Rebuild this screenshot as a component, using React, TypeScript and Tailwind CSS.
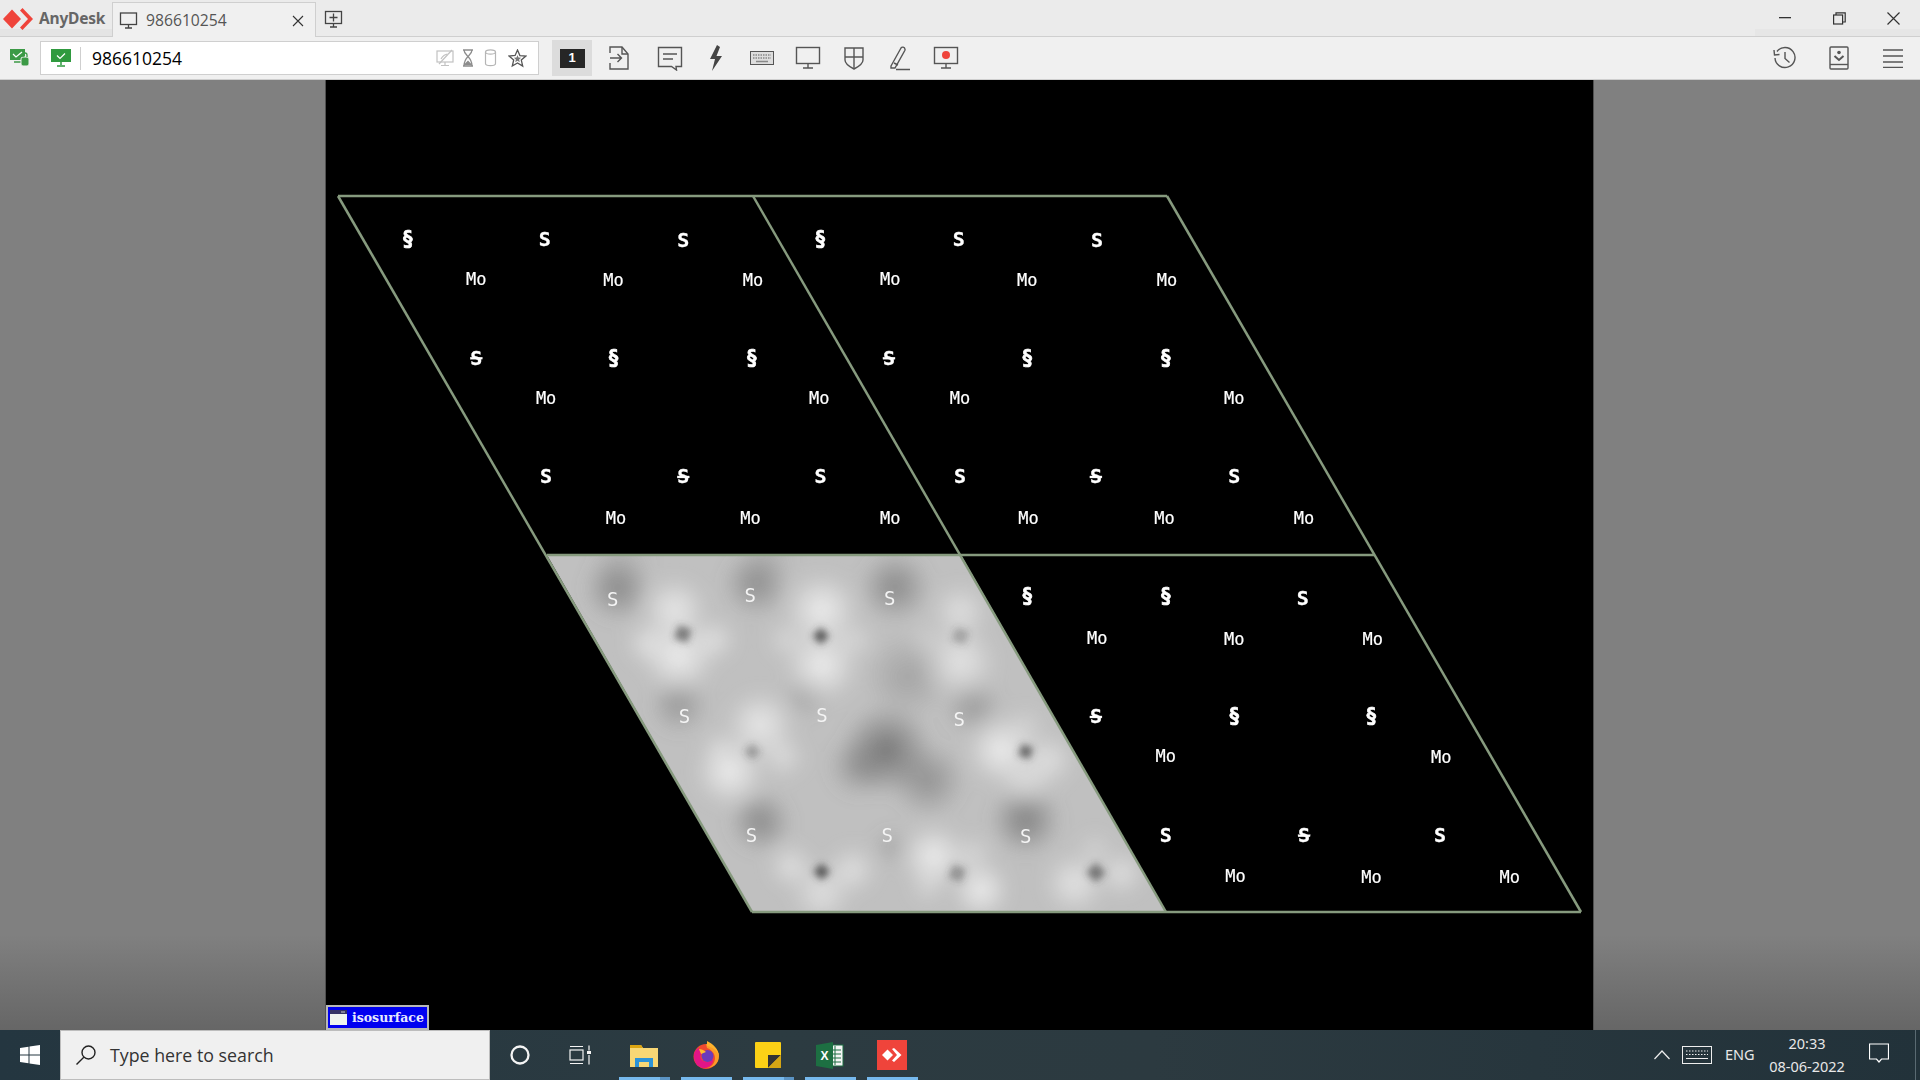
import React from "react";

const F = "font-['Open_Sans','Noto_Sans',sans-serif]";

function Logo() {
  return (
    <svg width="30" height="22" viewBox="0 0 30 22">
      <polygon points="0,11 9,1.500 18,11 9,20.500" fill="#ef443b" />
      <polygon points="17,2.500 19.500,0 30,11 19.500,22 17,19.500 25,11" fill="#ef443b" />
    </svg>
  );
}

function Ic({ w = 26, h = 26, children, s = "#555", sw = 1.4 }: { w?: number; h?: number; children: React.ReactNode; s?: string; sw?: number }) {
  return (
    <svg width={w} height={h} viewBox={`0 0 ${w} ${h}`} fill="none" stroke={s} strokeWidth={sw}>
      {children}
    </svg>
  );
}

function Monitor({ s = "#555", dot = false }: { s?: string; dot?: boolean }) {
  return (
    <Ic s={s}>
      <rect x="1.500" y="2.500" width="23" height="16" />
      <path d="M13 18.500v4M8 23h10" />
      {dot && <circle cx="13" cy="10" r="4" fill="#ef443b" stroke="none" />}
    </Ic>
  );
}

function Slot({ children, w = "w-[46px]" }: { children: React.ReactNode; w?: string }) {
  return <div className={`${w} h-full flex items-center justify-center shrink-0`}>{children}</div>;
}

function TitleBar() {
  return (
    <div className={`h-[37px] bg-[#ebebeb] flex items-stretch shrink-0 relative ${F}`}>
      <div className="absolute left-0 bottom-0 w-[112px] h-[8px] bg-[#e4e4e4]" />
      <div className="absolute right-0 bottom-0 w-[165px] h-[8px] bg-[#e6e6e6]" />
      <div className="relative w-[112px] flex items-center shrink-0 pl-[3px] pt-[2px] bg-transparent gap-[6px] border-b border-[#cfcfcf]">
        <Logo />
        <span className="text-[15.500px] font-bold text-[#666] tracking-[-0.2px] font-['Noto_Sans',sans-serif]">AnyDesk</span>
      </div>
      <div className="relative w-[204px] mt-[2px] bg-[#f0f0f0] border border-b-0 border-[#cfcfcf] flex items-center pl-[6px] pt-[1px] shrink-0">
        <svg width="20" height="20" viewBox="0 0 20 20" fill="none" stroke="#444" strokeWidth="1.300">
          <rect x="1.500" y="2" width="16" height="11.500" />
          <path d="M9.500 13.500v3M6 17h7" />
        </svg>
        <span className="ml-[7px] text-[15.700px] text-[#555]">986610254</span>
        <svg className="ml-auto mr-[11px]" width="12" height="12" viewBox="0 0 12 12" stroke="#333" strokeWidth="1.100">
          <path d="M1 1l10 10M11 1L1 11" />
        </svg>
      </div>
      <div className="relative flex-1 flex items-center border-b border-[#cfcfcf] pl-[8px]">
        <svg className="mt-[3px]" width="20" height="20" viewBox="0 0 20 20" fill="none" stroke="#444" strokeWidth="1.300">
          <rect x="1.500" y="1.500" width="16" height="12" />
          <path d="M9.500 3.500v8M5.500 7.500h8M9.500 13.500v3M6 17h7" />
        </svg>
        <div className="ml-auto flex h-full">
          <Slot w="w-[54px]">
            <svg width="12" height="2" viewBox="0 0 12 2"><rect width="12" height="1.300" fill="#333" /></svg>
          </Slot>
          <Slot w="w-[54px]">
            <svg width="13" height="13" viewBox="0 0 13 13" fill="none" stroke="#333" strokeWidth="1.200">
              <rect x="0.600" y="3" width="9" height="9" />
              <path d="M3 3V0.800h9.200V10H9.600" />
            </svg>
          </Slot>
          <Slot w="w-[54px]">
            <svg width="13" height="13" viewBox="0 0 13 13" stroke="#333" strokeWidth="1.200"><path d="M0.500 0.500l12 12M12.500 0.500l-12 12" /></svg>
          </Slot>
        </div>
      </div>
    </div>
  );
}

function Toolbar() {
  return (
    <div className={`h-[43px] bg-[#f0f0f0] flex items-center shrink-0 border-b border-[#cfcfcf] ${F}`}>
      <div className="w-[40px] flex justify-center shrink-0">
        <svg width="20" height="20" viewBox="0 0 20 20">
          <rect x="0" y="1" width="15" height="11" fill="#3c9a46" />
          <path d="M3 6l3 3 6-5" stroke="#fff" strokeWidth="1.200" fill="none" />
          <path d="M4 14h8" stroke="#3c9a46" strokeWidth="1.500" />
          <rect x="11" y="9" width="8" height="9" rx="2" fill="#3c9a46" stroke="#f0f0f0" />
          <path d="M13 9V7a2 2 0 0 1 4 0v2" stroke="#3c9a46" strokeWidth="1.300" fill="none" />
        </svg>
      </div>
      <div className="w-[499px] h-[34px] bg-white border border-[#cfcfcf] flex items-center shrink-0">
        <div className="w-[40px] h-[23px] flex items-center justify-center border-r border-[#cfcfcf] shrink-0">
          <svg width="20" height="20" viewBox="0 0 20 20">
            <rect x="0" y="1" width="20" height="13" fill="#2f9a3f" />
            <path d="M6 7.500l3 3 5-5" stroke="#fff" strokeWidth="1.200" fill="none" />
            <path d="M10 14v3M6 18h8" stroke="#2f9a3f" strokeWidth="1.500" />
          </svg>
        </div>
        <span className="ml-[11px] text-[17.500px] text-black">986610254</span>
        <div className="ml-auto flex items-center mr-[11px]">
          <svg width="18" height="18" viewBox="0 0 18 18" fill="none" stroke="#c2c2c2" strokeWidth="1.200">
            <rect x="1" y="2" width="16" height="11" />
            <path d="M9 13v3M5 16.500h8M3 15L16 1M5 10c1-2 3-5 8-5" />
          </svg>
          <svg className="ml-[8px]" width="12" height="18" viewBox="0 0 12 18" fill="none" stroke="#8d8d8d" strokeWidth="1.300">
            <path d="M1 1h10M1 17h10M2 1c0 6 8 6 8 16M10 1c0 6-8 6-8 16" />
            <path d="M3 15.500l3-3 3 3z" fill="#8d8d8d" />
          </svg>
          <svg className="ml-[10px]" width="13" height="18" viewBox="0 0 13 18" fill="none" stroke="#b5b5b5" strokeWidth="1.200">
            <ellipse cx="6.500" cy="3" rx="5" ry="2.200" />
            <path d="M1.500 3v11.500c0 1.400 2 2.200 5 2.200s5-.8 5-2.200V3" />
          </svg>
          <svg className="ml-[11px]" width="19" height="19" viewBox="0 0 19 19" fill="none" stroke="#555" strokeWidth="1.300">
            <path d="M9.500 1l2.400 5.600 6 .5-4.600 4 1.400 6-5.200-3.200L4.300 17l1.400-6-4.600-4 6-.5z" />
            <path d="M9.500 6l1 2.600 2.700.2-2.100 1.800.7 2.700-2.300-1.500-2.300 1.500.7-2.700-2.100-1.800 2.700-.2z" fill="#777" stroke="none" />
          </svg>
        </div>
      </div>
      <div className="ml-[13px] w-[40px] h-[36px] bg-[#dcdcdc] flex items-center justify-center shrink-0">
        <div className="w-[25px] h-[19px] bg-[#262626] flex items-center justify-center text-white text-[13px] font-bold font-['Liberation_Sans',sans-serif]">1</div>
      </div>
      <div className="ml-[4px] h-full flex items-center">
        <Slot>
          <Ic w={20} h={24}>
            <path d="M1 7V1h12l6 7v15H1v-6" />
            <path d="M13 1v7h6" />
            <path d="M1 12h11M8.500 8l4 4-4 4" />
          </Ic>
        </Slot>
      </div>
      <div className="ml-[5px] flex items-center h-full">
        <Slot>
          <Ic>
            <path d="M1.500 2.500h23v19H19l.5 3.500-5-3.500H1.500z" />
            <path d="M6 9h14M6 14h10" />
          </Ic>
        </Slot>
        <Slot>
          <svg width="14" height="26" viewBox="0 0 14 26"><path d="M8 0L1 14h5L3 26l10-15H7.500L11 2z" fill="#444" /></svg>
        </Slot>
        <Slot>
          <svg width="24" height="14" viewBox="0 0 24 14">
            <rect x="0.500" y="0.500" width="23" height="13" fill="#ddd" stroke="#555" />
            <path d="M3 4h18M3 7h18" stroke="#888" strokeWidth="1.500" strokeDasharray="1.500 1" />
            <path d="M6 10.500h12" stroke="#888" strokeWidth="1.500" />
          </svg>
        </Slot>
        <Slot><Monitor /></Slot>
        <Slot>
          <Ic w={20} h={24}>
            <path d="M1 2h18v12c0 4-5 7-9 9-4-2-9-5-9-9z" />
            <path d="M10 2v21M1 11h18" />
          </Ic>
        </Slot>
        <Slot>
          <Ic w={22} h={26}>
            <path d="M2 21L12 3c1-1.500 3.500-1 4 1 .2.500 0 1-.2 1.500L6 23H2z" />
            <path d="M5 18l4 2M7 24.500h14" />
          </Ic>
        </Slot>
        <Slot><Monitor dot /></Slot>
      </div>
      <div className="ml-auto flex h-full">
        <Slot w="w-[54px]">
          <Ic w={24} h={24}>
            <path d="M4 5.500A10 10 0 1 1 2 12" />
            <path d="M1 4l.5 5 5-.5" />
            <path d="M12 6v6.500l4.500 4" />
          </Ic>
        </Slot>
        <Slot w="w-[54px]">
          <Ic w={20} h={24}>
            <rect x="1" y="1" width="18" height="22" rx="1" />
            <path d="M1 18.500h18" />
            <circle cx="10" cy="6.500" r="1.800" fill="#555" stroke="none" />
            <path d="M5.500 10l4.500 4 4.500-4" strokeWidth="2" />
          </Ic>
        </Slot>
        <Slot w="w-[54px]">
          <svg width="20" height="20" viewBox="0 0 20 20" stroke="#555" strokeWidth="1.400">
            <path d="M0 2h20M0 8h20M0 14h20M0 19.500h20" />
          </svg>
        </Slot>
      </div>
    </div>
  );
}

const k = 1920 / 1568;
const X0 = 325;
const Y0 = 80;
const fx = (x: number) => x * k - X0;
const fy = (y: number) => y * k - Y0;

type L = [number, number, string];
const sect = "§";
const labels: L[] = [
  [333, 195, sect], [445, 195, "S"], [558, 196, "S"], [389, 292, "s"], [501, 292, sect], [614, 292, sect], [446, 389, "S"], [558, 389, "s"], [670, 389, "S"],
  [670, 195, sect], [783, 195, "S"], [896, 196, "S"], [726, 292, "s"], [839, 292, sect], [952, 292, sect], [784, 389, "S"], [895, 389, "s"], [1008, 389, "S"],
  [839, 487, sect], [952, 487, sect], [1064, 488, "S"], [895, 585, "s"], [1008, 585, sect], [1120, 585, sect], [952, 682, "S"], [1065, 682, "s"], [1176, 682, "S"],
];
const mos: [number, number][] = [
  [389, 228], [501, 229], [615, 229], [446, 325], [669, 325], [503, 423], [613, 423], [727, 423],
  [727, 228], [839, 229], [953, 229], [784, 325], [1008, 325], [840, 423], [951, 423], [1065, 423],
  [896, 521], [1008, 522], [1121, 522], [952, 617], [1177, 618], [1009, 715], [1120, 716], [1233, 716],
];
const z = (x: number) => 540 + x / 2.45 - X0;
const w = (y: number) => 550 + y / 3 - Y0;
const greyS: [number, number][] = [[178, 148], [515, 135], [857, 143], [354, 499], [691, 496], [1027, 507], [518, 855], [851, 855], [1190, 858]];
const spots: [number, number, number, number][] = [
  [350, 252, 7, 0.6], [688, 258, 6, 0.8], [1030, 258, 7, 0.3], [520, 605, 6, 0.35], [1190, 605, 6, 0.7], [690, 965, 6, 0.8], [1022, 970, 7, 0.4], [1362, 968, 7, 0.6],
];
const darks: [number, number, number, number][] = [
  [190, 115, 34, 0.7], [530, 100, 34, 0.65], [870, 110, 36, 0.7], [340, 465, 30, 0.5], [650, 440, 24, 0.3], [1060, 470, 30, 0.45], [540, 815, 32, 0.7], [860, 890, 20, 0.3], [1190, 810, 36, 0.8],
  [850, 600, 46, 0.95], [780, 650, 32, 0.5], [950, 690, 38, 0.6], [200, 30, 34, 0.15], [900, 380, 44, 0.35], [560, 20, 30, 0.15],
];
const halos: [number, number, number, number][] = [
  [330, 180, 34, 0.9], [340, 320, 38, 1], [265, 280, 24, 0.7], [425, 270, 24, 0.7],
  [690, 180, 38, 1], [690, 345, 38, 1], [605, 270, 22, 0.5], [770, 270, 22, 0.5],
  [1030, 185, 30, 0.7], [1030, 335, 38, 0.8], [950, 270, 20, 0.3],
  [540, 525, 36, 0.9], [465, 665, 36, 1], [595, 620, 24, 0.6], [440, 590, 20, 0.4],
  [1130, 600, 36, 1], [1245, 630, 28, 0.7], [1190, 690, 28, 0.6], [1190, 530, 22, 0.4],
  [615, 950, 24, 0.7], [765, 960, 26, 0.7], [690, 1030, 32, 0.7],
  [965, 920, 34, 1], [1080, 1020, 30, 1], [1060, 915, 22, 0.5], [950, 1010, 20, 0.4],
  [1310, 1000, 32, 0.8], [1425, 970, 24, 0.7], [1360, 900, 20, 0.4],
];

function Lattice() {
  const p = (x: number, y: number) => `${x - X0},${y - Y0}`;
  const xs = [338, 753, 1167];
  const ml = [547, 961, 1374];
  const bt = [752, 1166, 1581];
  const grey = [p(547, 555), p(961, 555), p(1166, 912), p(752, 912)].join(" ");
  return (
    <svg className="w-full h-full block" viewBox="0 0 1269 950" width="1269" height="950">
      <defs>
        <clipPath id="gc"><polygon points={grey} /></clipPath>
        <radialGradient id="dk"><stop offset="0%" stopColor="#707070" /><stop offset="55%" stopColor="#707070" stopOpacity="0.45" /><stop offset="100%" stopColor="#707070" stopOpacity="0" /></radialGradient>
        <radialGradient id="wh"><stop offset="0%" stopColor="#eeeeee" /><stop offset="100%" stopColor="#eeeeee" stopOpacity="0" /></radialGradient>
        <filter id="bl" x="-50%" y="-50%" width="200%" height="200%"><feGaussianBlur stdDeviation="3.500" /></filter>
        <filter id="bg" x="-10%" y="-10%" width="120%" height="120%"><feGaussianBlur stdDeviation="8" /></filter>
      </defs>
      <g clipPath="url(#gc)">
        <rect x="200" y="460" width="700" height="380" fill="#c0c0c0" />
        <g filter="url(#bg)">
          {darks.map(([x, y, r, o], i) => <circle key={i} cx={z(x)} cy={w(y)} r={r} fill="url(#dk)" opacity={o} />)}
          {halos.map(([x, y, r, o], i) => <circle key={i} cx={z(x)} cy={w(y)} r={r} fill="url(#wh)" opacity={o} />)}
        </g>
        <g filter="url(#bl)">
          {spots.map(([x, y, r, o], i) => <rect key={i} x={z(x) - r} y={w(y) - r} width={r * 2} height={r * 2} transform={`rotate(${i % 2 ? 45 : 20} ${z(x)} ${w(y)})`} fill="#404040" opacity={o} />)}
        </g>
      </g>
      <g fill="none" stroke="#869a7e" strokeWidth="2.500">
        <path d={`M${p(xs[0], 196)}L${p(xs[2], 196)}`} />
        <path d={`M${p(ml[0], 555)}L${p(ml[2], 555)}`} />
        <path d={`M${p(bt[0], 912)}L${p(bt[2], 912)}`} />
        <path d={`M${p(xs[0], 196)}L${p(bt[0], 912)}`} />
        <path d={`M${p(xs[1], 196)}L${p(bt[1], 912)}`} />
        <path d={`M${p(xs[2], 196)}L${p(bt[2], 912)}`} />
      </g>
      <g className="font-['DejaVu_Sans_Mono',monospace]" fill="#fff" textAnchor="middle">
        {labels.map(([x, y, t], i) => (
          <text key={i} x={fx(x)} y={fy(y) + 7} fontSize={t === sect ? 21 : 20} fontWeight="700" stroke="#fff" strokeWidth={t === sect ? 0.7 : 0.3} textDecoration={t === "s" ? "line-through" : undefined}>
            {t === "s" ? "S" : t}
          </text>
        ))}
        {mos.map(([x, y], i) => (
          <text key={i} x={fx(x)} y={fy(y) + 6} fontSize="17" fontWeight="400" stroke="#fff" strokeWidth="0.200">Mo</text>
        ))}
        {greyS.map(([x, y], i) => (
          <text key={i} x={z(x)} y={w(y) + 7} fontSize="19" fill="#f4f4f4">S</text>
        ))}
      </g>
    </svg>
  );
}

const side = "bg-[linear-gradient(to_bottom,#808080_0%,#808080_90%,#666666_100%)]";

function Main() {
  return (
    <div className="flex-1 flex min-h-0">
      <div className={`w-[325px] shrink-0 ${side}`} />
      <div className="w-[1269px] shrink-0 bg-black relative shadow-[inset_1px_0_#505050,inset_-1px_0_#505050]">
        <Lattice />
        <div className="absolute left-[1px] bottom-[0px] w-[103px] h-[25px] bg-[#0000f0] border-2 border-[#b8b8b8] flex items-center pl-[2px]">
          <svg width="17" height="15" viewBox="0 0 17 15">
            <rect x="0" y="0" width="17" height="15" fill="#eef4ee" />
            <rect x="0" y="0" width="17" height="4" fill="#343464" />
            <rect x="11" y="1.500" width="4" height="1" fill="#ccc" />
          </svg>
          <span className="ml-[5px] mt-[1px] text-[12.500px] font-bold leading-none text-[#e8e8ff] font-['DejaVu_Serif',serif]">isosurface</span>
        </div>
      </div>
      <div className={`flex-1 ${side}`} />
    </div>
  );
}

function TBItem({ children, split }: { children: React.ReactNode; split?: boolean }) {
  return (
    <div className="relative w-[51px] h-full flex items-center justify-center mr-[11px] shrink-0">
      {children}
      <div className="absolute left-0 right-0 bottom-0 h-[3px] flex">
        <div className="flex-1 bg-[#76b9ed]" />
        {split && <div className="w-[10px] bg-[#5b94c4]" />}
      </div>
    </div>
  );
}

function Taskbar() {
  return (
    <div className="h-[50px] shrink-0 flex items-stretch bg-[linear-gradient(to_right,#243640_0%,#2c3b41_40%,#2c3a40_60%,#22323a_100%)] font-['Noto_Sans',sans-serif]">
      <div className="w-[60px] flex items-center justify-center shrink-0">
        <svg width="20" height="20" viewBox="0 0 20 20" fill="#fff">
          <path d="M0 3l8.500-1.200v7.700H0zM9.500 1.600L20 0v9.500H9.500zM0 10.500h8.500v7.700L0 17zM9.500 10.500H20V20L9.500 18.400z" />
        </svg>
      </div>
      <div className="w-[430px] bg-[#f0f0f0] border border-[#bdbdbd] flex items-center pl-[14px] shrink-0">
        <svg width="22" height="22" viewBox="0 0 22 22" fill="none" stroke="#222" strokeWidth="1.400">
          <circle cx="13.500" cy="8.500" r="6.500" />
          <path d="M8.800 13.300L1.500 20.500" />
        </svg>
        <span className="ml-[13px] text-[17.800px] text-[#333] font-['Open_Sans',sans-serif]">Type here to search</span>
      </div>
      <div className="w-[60px] flex items-center justify-center shrink-0">
        <svg width="20" height="20" viewBox="0 0 20 20" fill="none" stroke="#f4f4f4" strokeWidth="2.300">
          <circle cx="10" cy="10" r="8.500" />
        </svg>
      </div>
      <div className="w-[69px] pr-[9px] flex items-center justify-center shrink-0">
        <svg width="22" height="20" viewBox="0 0 22 20" fill="none" stroke="#f4f4f4" strokeWidth="1.200">
          <rect x="1" y="5" width="13" height="10" />
          <path d="M1 1.500h13M1 18.500h13M20 0.500v5M20 10v9.500" />
          <rect x="18" y="6" width="4" height="3" fill="#f4f4f4" stroke="none" />
        </svg>
      </div>
      <TBItem split>
        <svg className="-ml-[2px]" width="28" height="24" viewBox="0 0 28 24">
          <path d="M0 2h11l2 3h15v19H0z" fill="#f8d775" />
          <path d="M0 2h11l2 3H0z" fill="#dca512" />
          <path d="M5 24v-9h18v9h-4v-5H9v5z" fill="#2c93d8" />
        </svg>
      </TBItem>
      <TBItem>
        <svg className="-ml-[2px]" width="28" height="28" viewBox="0 0 28 28">
          <circle cx="14" cy="15.500" r="12.500" fill="#f0492f" />
          <path d="M14 3c8 2 13 6 13 12 0 8-6 12-13 12 6-1 9-5 9-10 0-4-3-8-8-10z" fill="#fb9b28" />
          <path d="M15 0c6 3 11 7 12 15-2-6-7-9-12-10z" fill="#ffb32c" />
          <path d="M2 15c0-4 2-7 5-8 0 3 2 4 4 4-3 2-4 6 0 9 4 2 9 1 10-3 1 6-4 10-9 10-6 0-10-5-10-12z" fill="#e31587" />
          <circle cx="15.500" cy="15" r="6" fill="#6a3bbb" />
          <path d="M7 8c2 0 5 1 7 3l-5 2z" fill="#ffbd2e" />
        </svg>
      </TBItem>
      <TBItem split>
        <svg className="-ml-[2px]" width="26" height="26" viewBox="0 0 26 26">
          <rect width="26" height="26" rx="1" fill="#fcd116" />
          <path d="M13 26V13h13z" fill="#333" />
          <path d="M26 13L13 26h13z" fill="#d5a514" />
        </svg>
      </TBItem>
      <TBItem>
        <svg className="-ml-[2px]" width="28" height="27" viewBox="0 0 28 27">
          <rect x="12" y="3" width="15" height="21" fill="#f5f5f5" stroke="#1d6f42" strokeWidth="1" />
          <path d="M15 8h10M15 12h10M15 16h10M15 20h10M19 4v19" stroke="#1d6f42" strokeWidth="1" />
          <path d="M0 3l17-3v27L0 24z" fill="#1d6f42" />
          <text x="8.500" y="18" textAnchor="middle" fontSize="12" fontWeight="700" fill="#fff" fontFamily="Liberation Sans">X</text>
        </svg>
      </TBItem>
      <TBItem>
        <div className="w-[30px] h-[30px] -ml-[1px] bg-[#ef443b] flex items-center justify-center">
          <svg width="20" height="14" viewBox="0 0 20 14">
            <polygon points="0,7 5.500,1.500 11,7 5.500,12.500" fill="#fff" />
            <polygon points="10,1 12,0 19.500,7 12,14 10,12.500 15,7" fill="#fff" />
          </svg>
        </div>
      </TBItem>
      <div className="ml-auto flex items-center text-[#e8e8e8] shrink-0">
        <svg width="16" height="10" viewBox="0 0 16 10" fill="none" stroke="#eee" strokeWidth="1.200"><path d="M0.500 9L8 1l7.500 8" /></svg>
        <svg className="ml-[12px]" width="30" height="18" viewBox="0 0 30 18" fill="none" stroke="#eee" strokeWidth="1">
          <rect x="0.500" y="0.500" width="29" height="17" />
          <path d="M4 5h22M4 8.500h22" strokeDasharray="1.500 1.500" />
          <path d="M4 12.500h22" />
        </svg>
        <span className="ml-[13px] text-[14.500px] w-[30px]">ENG</span>
        <div className="ml-[9px] w-[86px] flex flex-col items-center text-[14.500px] leading-[23px]">
          <span>20:33</span>
          <span>08-06-2022</span>
        </div>
        <svg className="ml-[19px] mb-[4px]" width="20" height="21" viewBox="0 0 20 21" fill="none" stroke="#fff" strokeWidth="1.200">
          <path d="M0.500 1h19v15h-7l-2.500 3-2.500-3h-7z" />
        </svg>
        <div className="ml-[26px] w-[1px] h-full bg-[#5a6a72]" />
        <div className="w-[4px]" />
      </div>
    </div>
  );
}

export default function App() {
  return (
    <div className="w-[1920px] h-[1080px] flex flex-col overflow-hidden">
      <TitleBar />
      <Toolbar />
      <Main />
      <Taskbar />
    </div>
  );
}
